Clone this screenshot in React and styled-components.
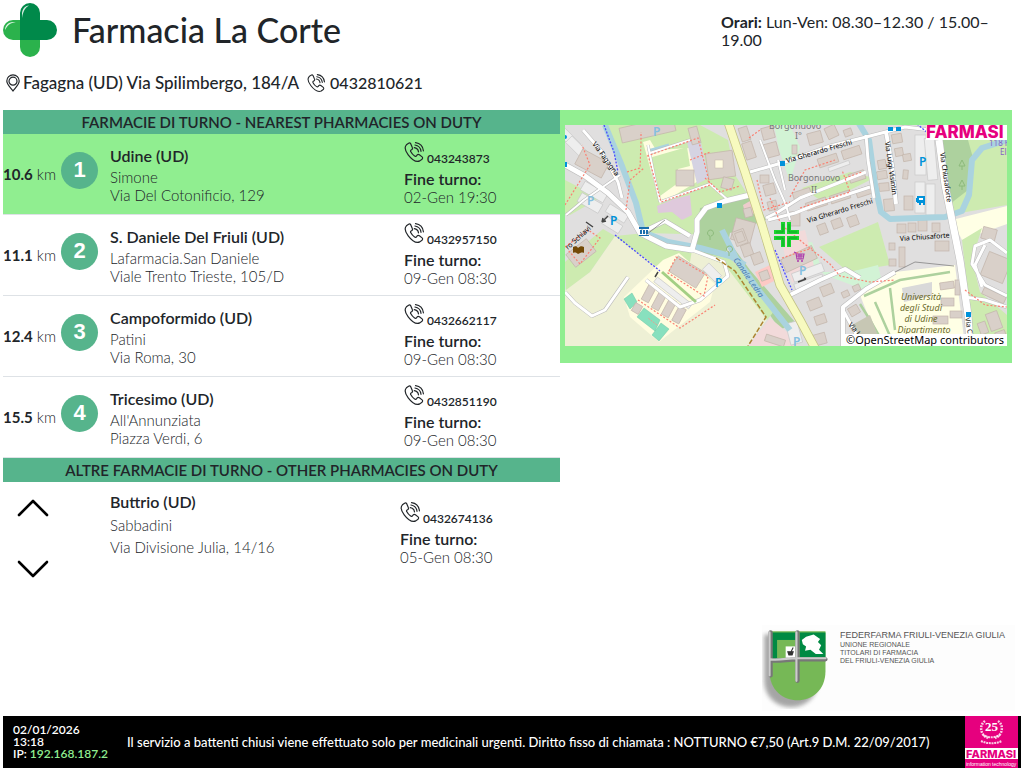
import styled, { createGlobalStyle, css } from "styled-components";

const GlobalStyle = createGlobalStyle`
  * {
    box-sizing: border-box;
  }
  body {
    margin: 0;
    background: #fff;
    color: #212529;
    font-family: Lato, "Open Sans", sans-serif;
    font-size: 16px;
    line-height: 18px;
  }
  h1, p, address {
    margin: 0;
    font-style: normal;
  }
  a {
    color: inherit;
    text-decoration: none;
  }
`;

const turno = [
  { km: "10.6", citta: "Udine (UD)", nome: "Simone", via: "Via Del Cotonificio, 129", tel: "043243873", fine: "02-Gen 19:30" },
  { km: "11.1", citta: "S. Daniele Del Friuli (UD)", nome: "Lafarmacia.San Daniele", via: "Viale Trento Trieste, 105/D", tel: "0432957150", fine: "09-Gen 08:30" },
  { km: "12.4", citta: "Campoformido (UD)", nome: "Patini", via: "Via Roma, 30", tel: "0432662117", fine: "09-Gen 08:30" },
  { km: "15.5", citta: "Tricesimo (UD)", nome: "All'Annunziata", via: "Piazza Verdi, 6", tel: "0432851190", fine: "09-Gen 08:30" },
];

const altre = [
  { citta: "Buttrio (UD)", nome: "Sabbadini", via: "Via Divisione Julia, 14/16", tel: "0432674136", fine: "05-Gen 08:30" },
];

function PhoneIcon({ size }) {
  return (
    <svg width={size} height={size} viewBox="0 0 20 20" fill="none" stroke="currentColor" strokeWidth="1.2" strokeLinecap="round" strokeLinejoin="round" aria-hidden="true">
      <path d="M4.6 1.3 2.4 2.8C.3 5.1 1 8.6 4.2 12.8c3.700 4.900 8.300 7.500 11.600 6.100l2.200-1.700c.8-.7.8-1.600.1-2.300l-2.700-2.100c-.8-.6-1.700-.5-2.300.2l-.8 1c-.5.5-1.100.4-1.700 0-1.600-1.100-3-2.600-3.900-4.400-.3-.6-.2-1.100.3-1.500l.9-.6c.7-.5.8-1.400.3-2.200L6.700 1.700c-.5-.7-1.300-.9-2.100-.4Z" />
      <path d="M10.300 5.600c2.300.3 3.900 2 4.200 4.200M10.900 3c3.500.5 5.700 2.900 6.100 6.300M11.500.7c4.500.6 7.400 3.700 7.900 8.100" />
    </svg>
  );
}

function PinIcon() {
  return (
    <svg width="14" height="18" viewBox="0 0 14 18" fill="none" stroke="currentColor" strokeWidth="1.2" aria-hidden="true">
      <path d="M7 17C4.700 13.800.8 10.600.8 7a6.200 6.200 0 0 1 12.400 0c0 3.600-3.900 6.800-6.200 10Z" />
      <circle cx="7" cy="7.200" r="4" />
    </svg>
  );
}

function CrossLogo() {
  return (
    <svg width="54" height="54" viewBox="0 0 54 54" aria-hidden="true">
      <rect x="17" y="17" width="20" height="37" rx="10" fill="#2bb24c" />
      <rect x="0" y="17" width="37" height="20" rx="10" fill="#2bb24c" />
      <path d="M17 37V10a10 10 0 0 1 20 0v7h7a10 10 0 0 1 0 20Z" fill="#00894a" />
      <path d="M19 15v-4c0-5 3-8 7-8.500-3 2-5.500 4-7 12.500ZM2 27c0-4 3-8 8-8h5c-6 0-10 2-13 8Z" fill="#fff" opacity=".85" />
    </svg>
  );
}

function Chevron({ down }) {
  return (
    <svg width="32" height="18" viewBox="0 0 32 18" fill="none" stroke="#000" strokeWidth="2.600" strokeLinecap="round" strokeLinejoin="round" aria-hidden="true">
      <path d={down ? "M2 2 16 16 30 2" : "M2 16 16 2 30 16"} />
    </svg>
  );
}

// x, y, width, height, rotation
const edifici = [
  [577, 155, 30, 17, 28], [620, 122, 55, 15, -13], [690, 127, 9, 17, -15], [676, 170, 18, 16, 0], [707, 152, 27, 26, -8],
  [722, 178, 11, 11, 15], [740, 127, 9, 14, -18], [744, 142, 10, 17, -18], [762, 127, 12, 12, -15], [764, 143, 14, 14, -15],
  [760, 175, 9, 8, 0], [764, 184, 11, 11, -15], [768, 201, 9, 9, -15], [744, 208, 8, 9, -15], [733, 220, 20, 22, 15],
  [808, 132, 14, 12, -15], [826, 126, 11, 12, -25], [844, 129, 8, 7, -20], [792, 145, 5, 9, 0], [842, 148, 19, 9, -18],
  [818, 156, 20, 9, -18], [793, 190, 18, 8, -18], [849, 172, 16, 9, -18], [806, 200, 21, 8, -18], [830, 193, 20, 8, -18],
  [856, 187, 20, 8, -18], [790, 212, 10, 14, 0], [818, 224, 9, 10, -20], [832, 219, 10, 9, -20], [848, 216, 10, 10, -20],
  [892, 134, 10, 9, -10], [895, 148, 8, 8, -10], [903, 154, 8, 7, -10], [878, 160, 8, 9, -10], [877, 171, 10, 8, -10],
  [903, 170, 5, 9, 5], [879, 183, 10, 8, -5], [884, 199, 10, 12, -5], [904, 196, 9, 14, 0], [897, 224, 9, 9, 0],
  [908, 223, 8, 9, 0], [918, 220, 9, 11, 0], [932, 223, 8, 9, 0], [889, 243, 6, 7, 0], [889, 259, 7, 7, 0], [899, 247, 6, 20, 0],
  [935, 241, 14, 10, 0], [568, 245, 26, 16, -38], [671, 263, 32, 18, 32], [734, 230, 12, 15, -20], [742, 244, 10, 12, -20],
  [752, 253, 10, 11, -20], [760, 271, 9, 9, -20], [736, 232, 8, 10, -20], [782, 252, 34, 14, -25], [821, 285, 12, 10, -22],
  [808, 299, 13, 10, -22], [815, 315, 11, 9, -18], [842, 291, 7, 6, -25], [853, 285, 7, 6, -25], [849, 306, 10, 9, -30],
  [811, 334, 15, 11, -15], [940, 282, 14, 7, -8], [955, 280, 5, 15, 0], [941, 298, 13, 8, 0], [950, 311, 12, 7, 0],
  [933, 316, 15, 8, 0], [984, 255, 24, 25, 22], [982, 292, 24, 7, 25], [982, 228, 14, 12, 15], [988, 312, 12, 18, -20],
  [979, 322, 8, 12, -20], [996, 331, 10, 9, -20], [633, 304, 8, 9, 30], [645, 284, 8, 18, 28], [655, 292, 8, 18, 28],
  [665, 299, 8, 18, 28], [675, 307, 8, 16, 28], [765, 337, 20, 7, 18],
];

const parcheggi = [
  [565, 128, 9, 22, -45], [572, 136, 9, 22, -45], [581, 187, 26, 10, 30], [578, 198, 24, 10, 30], [606, 209, 22, 9, 32],
  [602, 220, 20, 9, 32], [915, 135, 11, 40, 0], [926, 138, 10, 42, -5], [915, 182, 10, 31, 0], [926, 184, 9, 31, 0],
  [792, 268, 32, 9, -20], [794, 279, 30, 7, -20], [703, 268, 18, 9, 45], [788, 322, 12, 22, -15], [828, 164, 22, 4, -20],
  [651, 290, 44, 6, 38],
];

const verdi = [
  "M605 125 622 166 645 233 720 235 748 195 735 175 728 140 700 125Z",
  "M565 180 600 198 570 215 565 213Z",
  "M565 262 590 240 603 229 615 236 590 272 566 290Z",
  "M819 247 878 222 890 265 848 272Z",
  "M938 140 1007 140 1007 205 966 212 950 215Z",
  "M802 188 850 172 874 178 850 190 820 200Z",
];

const strade = [
  [5, "M565 165 585 176 608 193 628 212 640 233 666 246 692 250 697 232 697 220 706 208 725 201 754 194"],
  [4, "M640 233 665 221 690 236"],
  [3, "M583 130 602 152 618 182 622 198"],
  [3, "M750 172 785 162 830 146 866 137 905 127 930 130"],
  [3, "M766 218 778 212 800 198 866 172"],
  [3, "M866 135 868 160 874 198"],
  [4, "M886 132 892 165 896 204"],
  [3, "M768 220 795 213 815 205 870 187"],
  [7, "M939 140 945 185 952 220 960 260 968 315 970 346"],
  [4, "M790 295 820 280 845 269 860 278"],
  [4, "M843 346 843 307 866 289 895 272"],
  [3, "M843 310 856 334"],
  [3, "M565 292 575 303 592 316 605 310 628 277"],
  [3, "M692 250 724 262 728 276 700 300 680 307 646 280"],
  [3, "M965 297 985 300 1007 307"],
  [3, "M985 245 975 265 982 287M1007 253 990 240 975 246 972 264 985 285 1007 296"],
  [2, "M648 145 655 180 660 202M650 153 690 140M660 202 710 184 728 200"],
  [2, "M760 140 775 180 786 205 790 220M778 160 785 190"],
  [2, "M566 215 584 200 620 175"],
];

const sentieri = [
  "M627 172 640 168 641 142 641 132M647 156 698 138 710 185 661 202 648 155M690 160 710 152M565 205 590 165 582 145",
  "M626 210 630 180 644 168M705 178 720 192 740 186",
  "M757 180 764 210 790 202M749 138 760 130M770 198 780 222",
  "M790 197 805 170 835 160M800 208 850 192 842 170M845 178 862 172",
  "M785 228 812 250 830 264 840 276 870 282 895 280",
  "M565 247 588 230 600 238 580 264 568 250M676 257 708 276 704 296 668 273Z",
  "M638 300 680 328 715 305M965 290 985 305 1007 307M782 258 812 248",
];

function Mappa() {
  return (
    <svg viewBox="565 125 442 221" role="img" aria-label="Mappa">
      <rect x="565" y="125" width="442" height="221" fill="#e0dfdf" />
      <path d="M565 290 590 272 615 236 692 252 730 262 768 318 748 346 565 346Z" fill="#eef0d5" />
      {verdi.map((d) => (
        <path key={d} d={d} fill="#cdebb0" />
      ))}
      <path d="M615 236 645 233 692 250 690 262 674 256 661 270Z" fill="#cdebb0" />
      <path d="M700 208 754 196 766 220 730 233 725 258 695 252Z" fill="#add19e" />
      <path d="M722 232 750 270 795 322 780 330 735 263Z" fill="#add19e" />
      <path d="M695 252 730 258 775 310 767 320 725 265Z" fill="#cdebb0" />
      <path d="M940 140 968 140 973 158 968 190 950 204Z" fill="#add19e" />
      <path d="M774 125 790 125 800 147 790 182 779 150Z" fill="#d2f3d5" />
      <path d="M790 245 812 242 823 272 850 272 878 265 882 282 865 290 825 275Z" fill="#d2f3d5" />
      <path d="M860 295 895 272 955 265 965 346 880 346Z" fill="#ffffe5" />
      <path d="M952 220 1007 206 1007 224 962 240Z" fill="#ffffe5" />
      <path d="M962 240 982 228 972 260 980 292 1007 315 1007 346 974 346Z" fill="#cdebb0" />
      <path d="M624 297 663 260 679 253 715 284 710 302 659 342 630 317Z" fill="#fffde0" />
      <path d="M643 142 650 140 656 150 690 148 700 180 660 204Z" fill="#fffde0" />
      <path d="M649 158 687 147 690 166 678 169 678 183 660 196Z" fill="#cdebb0" />
      <path d="M687 142 700 138 709 178 697 184Z" fill="#d5d3e2" />
      <path d="M657 206 674 199 690 195 692 215 682 220 672 212 658 213Z" fill="#dfc9dc" />
      <path d="M748 346 770 318 793 337 798 346Z" fill="#f2dada" />
      <path d="M755 272 770 265 776 280 762 287Z" fill="#fdc9c5" />
      <path d="M743 205 750 201 755 213 746 217Z" fill="#edcccc" />
      <path d="M780 236 805 230 815 270 792 283Z" fill="#f2dada" />
      <path d="M624 299 632 293 637 302 630 309ZM637 317 644 308 660 320 655 331ZM652 335 661 323 669 329 659 341Z" fill="#88e0be" stroke="#6fc9a6" strokeWidth=".5" />
      <path d="M657 325 648 318" stroke="#e8a090" strokeDasharray="2 1" />
      <path d="M860 304 870 320 885 346M875 302 890 336M864 296 900 280 950 272M890 288 895 330" fill="none" stroke="#add19e" strokeWidth="2.500" />
      <path d="M902 288 932 282 932 296 904 302Z" fill="#d9d9d9" />
      <path d="M852 325 870 315 882 346 858 346Z" fill="#c7c7b4" />

      {parcheggi.map(([x, y, w, h, r], i) => (
        <rect key={i} x={x} y={y} width={w} height={h} fill="#eee" stroke="#c9c9c9" strokeWidth=".7" transform={`rotate(${r} ${x + w / 2} ${y + h / 2})`} />
      ))}
      {edifici.map(([x, y, w, h, r], i) => (
        <rect key={i} x={x} y={y} width={w} height={h} fill="#d9d0c9" stroke="#c3b5ab" strokeWidth=".7" transform={`rotate(${r} ${x + w / 2} ${y + h / 2})`} />
      ))}
      <rect x="715" y="160" width="8" height="8" fill="#fffde0" stroke="#c3b5ab" strokeWidth=".5" />

      <g fill="none" stroke="#aad3df" strokeWidth="6" strokeLinejoin="round">
        <path d="M605 125 622 166 636 203 643 232 668 242 700 248 730 256 745 265" />
        <path d="M722 230 736 258 756 287 790 330" />
        <path d="M858 122 869 140 875 185 881 212 890 219 945 217 962 211 969 195 972 160 982 148 1007 140" />
        <path d="M648 151 669 145" strokeWidth="3" />
      </g>

      {strade.map(([w, d]) => (
        <path key={d} d={d} fill="none" stroke="#bbb" strokeWidth={w + 1} strokeLinejoin="round" />
      ))}
      {strade.map(([w, d]) => (
        <path key={d} d={d} fill="none" stroke="#fff" strokeWidth={w} strokeLinejoin="round" />
      ))}
      <path d="M728 122 745 172 762 225 780 285 800 320 815 348" fill="none" stroke="#c2c283" strokeWidth="9" />
      <path d="M728 122 745 172 762 225 780 285 800 320 815 348" fill="none" stroke="#f7fabf" strokeWidth="7.500" />
      {sentieri.map((d) => (
        <path key={d} d={d} fill="none" stroke="#fa8072" strokeWidth="1.200" strokeDasharray="2 1.800" />
      ))}
      <path d="M604 125 614 152 618 172M615 235 660 271M775 250 792 290M917 124 928 133" fill="none" stroke="#4a4aff" strokeWidth="1.300" strokeDasharray="2 1.500" />
      <path d="M716 258 735 271 766 317 748 346" fill="none" stroke="#ac8331" strokeWidth="1.500" strokeDasharray="5 2" />
      <path d="M662 272 696 302" stroke="#a3cf84" strokeWidth="3" />
      <path d="M895 272 915 262 954 266M646 235 665 220" fill="none" stroke="#777" strokeWidth=".7" />

      <g fill="#0092da">
        <rect x="717" y="203" width="5" height="5" />
        <rect x="780" y="161" width="5" height="5" />
        <rect x="888" y="127" width="5" height="4" />
        <rect x="896" y="127" width="5" height="4" />
        <rect x="966" y="312" width="5" height="5" />
        <circle cx="565" cy="137" r="2" />
        <rect x="564" y="162" width="3" height="5" />
        <path d="M917 196h8v7h-8Zm-1 2h2v4h-2Zm3 5h2v2h-2Zm4 0h2v2h-2Z" />
      </g>
      <path d="M919 198h4v2h-4Z" fill="#fff" />
      <path d="M639 227h10v2h-10Zm1 3h2v4h-2Zm3 0h2v4h-2Zm3 0h2v4h-2Zm-7 5h10v1h-10Z" fill="#1c6fad" />
      <path d="M573 247c2-1 4-1 5 1 2-2 4-2 6-1v6c-2-1-4 0-6 1-1-1-3-2-5-1Z" fill="#734a08" />
      <path d="m794 252 2 1 1 6h6l1-5h-7M797 256h6M799 254v5M801 254v5" fill="none" stroke="#ac39ac" strokeWidth="1.200" />
      <circle cx="798" cy="261" r="1" fill="#ac39ac" />
      <circle cx="802" cy="261" r="1" fill="#ac39ac" />
      <path d="m602 222 6-6m-6 6 1-4m-1 4 4-1M658 272l-3 5M798 282l8-3m0 0-2-1M586 222l7 5" fill="none" stroke="#444" strokeWidth="1.500" />
      <g fill="none" stroke="#8cba7b">
        <path d="M710 240v-4m0 0a3 3 0 1 1 1 0M729 256v-4m0 0a3 3 0 1 1 1 0M962 170v-4l-3 0 3-6 3 6h-3M962 190v-4l-3 0 3-6 3 6h-3" />
      </g>

      <MapText>
        <g fill="#0092da" fontSize="12" fontWeight="600">
          <text x="610" y="225">P</text>
          <text x="715" y="287">P</text>
          <text x="919" y="166">P</text>
        </g>
        <g fill="#85bfe0" fontSize="12" fontWeight="600">
          <text x="587" y="205">P</text>
          <text x="653" y="136">P</text>
          <text x="799" y="275">P</text>
          <text x="793" y="346">P</text>
        </g>
        <g fill="#777" fontSize="9">
          <text x="769" y="129">Borgonuovo</text>
          <text x="795" y="139">I°</text>
          <text x="788" y="181">Borgonuovo</text>
          <text x="811" y="193">II</text>
        </g>
        <g fontSize="7">
          <text transform="translate(592 144) rotate(54)">Via Fagagna</text>
          <text transform="translate(568 250) rotate(-42)">ro Schiavi</text>
          <text transform="translate(787 163) rotate(-16)">Via Gherardo Freschi</text>
          <text transform="translate(808 223) rotate(-17)">Via Gherardo Freschi</text>
          <text transform="translate(885 142) rotate(82)">Via Luigi Visintin</text>
          <text transform="translate(940 153) rotate(82)">Via Chiusaforte</text>
          <text transform="translate(900 241) rotate(-4)">Via Chiusaforte</text>
          <text transform="translate(848 325) rotate(50)">Via L</text>
          <text transform="translate(965 318) rotate(80)">Via Ch</text>
        </g>
        <text transform="translate(733 260) rotate(55)" fontSize="8" fontStyle="italic" fill="#4d80b3">Canale Ledra</text>
        <g fontSize="9" fontStyle="italic" fill="#6b6a2b" textAnchor="middle">
          <text x="921" y="300">Università</text>
          <text x="921" y="311">degli Studi</text>
          <text x="921" y="322">di Udine</text>
          <text x="924" y="333">Dipartimento</text>
        </g>
        <g fontSize="8" fill="#8461c4">
          <text x="989" y="146">118 F</text>
          <text x="1000" y="155">El</text>
        </g>
      </MapText>

      <rect x="926" y="125" width="81" height="15" fill="#fff" />
      <BrandText x="926" y="138" fontSize="17">FARMASI</BrandText>

      <g fill="#19d42f">
        <path d="M781 222h4v12h-11v-4h7ZM787 222h4v8h8v4h-12ZM774 236h11v11h-4v-7h-7ZM787 236h12v4h-8v7h-4Z" />
      </g>
      <path d="M783 224v8h-7M789 224v8h8M783 246v-8h-7M789 246v-8h8" fill="none" stroke="#0f9a24" strokeWidth=".8" />

      <rect x="844" y="334" width="163" height="12" fill="#fff" />
      <MapText>
        <text x="846" y="344" fontSize="11">©OpenStreetMap contributors</text>
      </MapText>
    </svg>
  );
}

function FederfarmaShield() {
  return (
    <svg width="71" height="80" viewBox="0 0 66 74" aria-hidden="true">
      <defs>
        <filter id="ombra" x="-20%" y="-20%" width="140%" height="140%">
          <feGaussianBlur stdDeviation="2" />
        </filter>
      </defs>
      <path d="M2 5h50v42c0 34-50 34-50 0Z" fill="#777" opacity=".65" filter="url(#ombra)" />
      <path d="M7 2h52v37c0 36-52 36-52 0Z" fill="#76b856" />
      <path d="M8 3h24v25H8ZM35 3h24v23H35Z" fill="#008a43" />
      <path d="M14 10h18v17H14Z" fill="#76b856" />
      <rect x="22" y="16" width="9" height="11" fill="#fff" />
      <path d="M24 21h5l-1 3h-3Zm3 0 2-4" fill="#333" stroke="#333" />
      <path d="m37 10 4-3 7-2 6 4-2 3 3 3-2 4 4 4h-7l-5-4-5 1 1-4-3-2Z" fill="#fff" />
      <path d="M8 3v40M8 29c8 1 16-1 24-1h27M33 3v45" fill="none" stroke="#777" strokeWidth="4" strokeLinecap="round" />
      <path d="M7 3v40M8 28c8 1 16-1 24-1h27M32 3v45" fill="none" stroke="#ccc" strokeWidth="2" strokeLinecap="round" />
    </svg>
  );
}

function FarmasiLogo() {
  return (
    <svg width="53" height="52" viewBox="0 0 53 52" role="img" aria-label="Farmasi">
      <rect width="53" height="52" fill="#e6007e" />
      <g fill="none" stroke="#fff">
        <path d="M20 5C14 9 15 19 23 22M33 5c6 4 5 14-3 17" strokeWidth="2.500" strokeDasharray="1.800 1" opacity=".8" />
        <path d="M18 19c5 3 12 3 17 0M16 25c7 3 14 3 21 0" strokeWidth="2" strokeDasharray="2 .7" opacity=".8" />
      </g>
      <text x="26.500" y="15" fontFamily="Liberation Serif" fontSize="13" textAnchor="middle" fill="#fff">25</text>
      <rect y="32" width="53" height="11" fill="#fff" />
      <BrandText x="1" y="42" fontSize="11">FARMASI</BrandText>
      <rect y="43" width="53" height="9" fill="#e6007e" />
      <text x="1" y="50" fontFamily="Liberation Sans" fontSize="5" fontWeight="400" fill="#fff">information technology</text>
    </svg>
  );
}

function Contatto({ farmacia }) {
  return (
    <>
      <PhoneLine href={`tel:${farmacia.tel}`}>
        <PhoneIcon size={20} />
        <span>{farmacia.tel}</span>
      </PhoneLine>
      <Strong>Fine turno:</Strong>
      <Light>{farmacia.fine}</Light>
    </>
  );
}

export default function App() {
  return (
    <Page>
      <GlobalStyle />
      <Header>
        <Brand>
          <CrossLogo />
          <Title>Farmacia La Corte</Title>
        </Brand>
        <Hours>
          <b>Orari:</b> Lun-Ven: 08.30–12.30 / 15.00–19.00
        </Hours>
      </Header>
      <Address>
        <PinIcon />
        <span>Fagagna (UD) Via Spilimbergo, 184/A</span>
        <HeaderPhone href="tel:0432810621">
          <PhoneIcon size={18} />
          0432810621
        </HeaderPhone>
      </Address>

      <Columns>
        <div>
          <Table>
            <thead>
              <tr>
                <SectionTitle colSpan={4}>FARMACIE DI TURNO - NEAREST PHARMACIES ON DUTY</SectionTitle>
              </tr>
            </thead>
            <tbody>
              {turno.map((f, i) => (
                <Row key={f.tel} $active={i === 0}>
                  <Cell $width="58px">
                    <Km>
                      <b>{f.km}</b> km
                    </Km>
                  </Cell>
                  <Cell $width="49px">
                    <Badge>{i + 1}</Badge>
                  </Cell>
                  <Cell>
                    <City>{f.citta}</City>
                    <Light>{f.nome}</Light>
                    <Light>{f.via}</Light>
                  </Cell>
                  <Cell $width="156px">
                    <Contatto farmacia={f} />
                  </Cell>
                </Row>
              ))}
            </tbody>
          </Table>
          <Table>
            <thead>
              <tr>
                <SectionTitle colSpan={3}>ALTRE FARMACIE DI TURNO - OTHER PHARMACIES ON DUTY</SectionTitle>
              </tr>
            </thead>
            <tbody>
              {altre.map((f) => (
                <OtherRow key={f.tel}>
                  <Cell $width="107px">
                    <Arrows>
                      <ArrowButton type="button" aria-label="Precedente">
                        <Chevron />
                      </ArrowButton>
                      <ArrowButton type="button" aria-label="Successiva">
                        <Chevron down />
                      </ArrowButton>
                    </Arrows>
                  </Cell>
                  <Cell $top="8px">
                    <City>{f.citta}</City>
                    <Light $tall>{f.nome}</Light>
                    <Light $tall>{f.via}</Light>
                  </Cell>
                  <Cell $width="160px" $top="20px">
                    <Contatto farmacia={f} />
                  </Cell>
                </OtherRow>
              ))}
            </tbody>
          </Table>
        </div>
        <MapPanel>
          <Mappa />
        </MapPanel>
      </Columns>

      <Federfarma>
        <FederfarmaShield />
        <FederText>
          <strong>FEDERFARMA FRIULI-VENEZIA GIULIA</strong>
          <p>UNIONE REGIONALE</p>
          <p>TITOLARI DI FARMACIA</p>
          <p>DEL FRIULI-VENEZIA GIULIA</p>
        </FederText>
      </Federfarma>

      <Footer>
        <Clock>
          <p>02/01/2026</p>
          <p>13:18</p>
          <p>
            IP: <span>192.168.187.2</span>
          </p>
        </Clock>
        <Notice>
          Il servizio a battenti chiusi viene effettuato solo per medicinali urgenti. Diritto fisso di chiamata : NOTTURNO €7,50 (Art.9 D.M. 22/09/2017)
        </Notice>
        <FarmasiLogo />
      </Footer>
    </Page>
  );
}

const Page = styled.div`
  display: flex;
  flex-direction: column;
  min-height: 100vh;
  padding: 0 3px;
`;

const Header = styled.header`
  display: flex;
  justify-content: space-between;
  padding: 3px 12px 0 0;
`;

const Brand = styled.div`
  display: flex;
  align-items: center;
  gap: 15px;
`;

const Title = styled.h1`
  font-size: 34px;
  font-weight: 500;
  line-height: 40px;
`;

const Hours = styled.p`
  width: 288px;
  padding-top: 10px;
`;

const Address = styled.address`
  display: flex;
  align-items: center;
  gap: 3px;
  height: 53px;
  padding: 0 0 2px 3px;
  font-size: 17px;
  font-weight: 500;
`;

const HeaderPhone = styled.a`
  display: flex;
  align-items: center;
  gap: 5px;
  margin-left: 5px;
  font-size: 16px;
`;

const Columns = styled.main`
  display: grid;
  grid-template-columns: minmax(0, 557fr) minmax(0, 452fr);
  align-items: start;
  padding-right: 9px;
`;

const Table = styled.table`
  width: 100%;
  border-spacing: 0;
`;

const SectionTitle = styled.th`
  height: 24px;
  padding: 0;
  background: #56b48c;
  font-size: 15px;
  font-weight: 600;
`;

const Row = styled.tr`
  height: 81px;
  td {
    border-bottom: 1px solid #dee2e6;
  }
  ${({ $active }) =>
    $active &&
    css`
      background: #90ee90;
    `}
`;

const OtherRow = styled.tr`
  vertical-align: top;
`;

const Cell = styled.td`
  width: ${({ $width }) => $width || "auto"};
  padding: ${({ $top }) => $top || "0"} 0 0;
`;

const Km = styled.span`
  font-size: 15px;
  font-weight: 300;
  b {
    font-weight: 700;
  }
`;

const Badge = styled.span`
  display: flex;
  align-items: center;
  justify-content: center;
  width: 37px;
  height: 37px;
  margin-bottom: 8px;
  border-radius: 50%;
  background: #56b48c;
  color: #fff;
  font: bold 22px "Liberation Sans", sans-serif;
`;

const Strong = styled.p`
  font-size: 16px;
  font-weight: 600;
`;

const City = styled(Strong)`
  line-height: 24px;
`;

const Light = styled.p`
  font-size: 15px;
  font-weight: 300;
  line-height: ${({ $tall }) => ($tall ? "22px" : "18px")};
`;

const PhoneLine = styled.a`
  display: flex;
  gap: 3px;
  height: 28px;
  font-size: 12px;
  font-weight: 600;
  span {
    padding-top: 8px;
  }
`;

const Arrows = styled.div`
  display: flex;
  flex-direction: column;
  gap: 43px;
  padding: 17px 0 0 14px;
`;

const ArrowButton = styled.button`
  display: flex;
  width: 32px;
  padding: 0;
  border: 0;
  background: none;
  cursor: pointer;
`;

const MapPanel = styled.section`
  padding: 15px 5px 17px;
  background: #90ee90;
  svg {
    display: block;
    width: 100%;
  }
`;

const MapText = styled.g`
  font-family: "Noto Sans", sans-serif;
`;

const BrandText = styled.text`
  font-family: Inter, sans-serif;
  font-weight: 800;
  fill: #e6007e;
`;

const Federfarma = styled.aside`
  display: flex;
  align-self: flex-end;
  gap: 7px;
  width: 253px;
  height: 86px;
  margin: auto 6px 5px 0;
  padding-top: 4px;
  background: #fdfdfd;
  svg {
    flex-shrink: 0;
  }
`;

const FederText = styled.div`
  color: #555;
  font: 7px/8px "Liberation Sans", sans-serif;
  white-space: nowrap;
  strong {
    display: block;
    font-size: 9px;
    font-weight: 400;
    line-height: 12px;
  }
`;

const Footer = styled.footer`
  display: flex;
  align-items: center;
  height: 52px;
  padding-right: 3px;
  background: #000;
  color: #fff;
  font-size: 12px;
  font-weight: 600;
`;

const Clock = styled.div`
  width: 124px;
  padding-left: 10px;
  line-height: 12px;
  span {
    color: #90ee90;
  }
`;

const Notice = styled.p`
  flex: 1;
  font-size: 13px;
  font-weight: 500;
`;
